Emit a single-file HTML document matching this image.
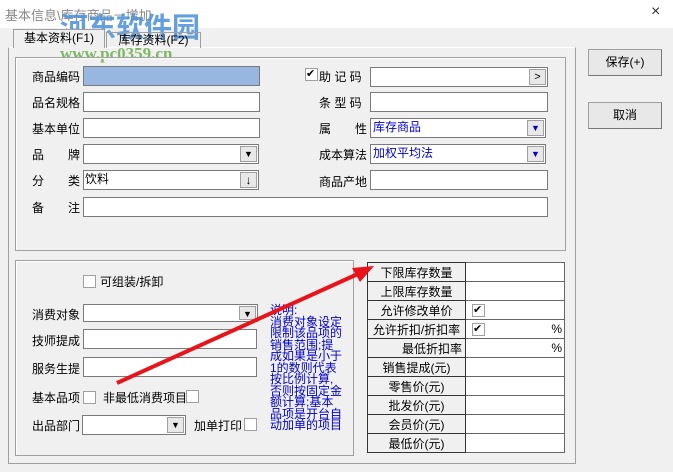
<!DOCTYPE html>
<html><head><meta charset="utf-8"><style>
*{box-sizing:border-box;margin:0;padding:0}
body{width:673px;height:472px;background:#f0f0f0;font-family:"Liberation Sans","Noto Sans CJK SC","WenQuanYi Zen Hei",sans-serif;font-size:12px;color:#000;position:relative;overflow:hidden}
.a{position:absolute;white-space:nowrap}
.in{position:absolute;background:#fff;border:1px solid #7a7a7a;height:20px}
.cb{position:absolute;width:13px;height:13px;background:#fff;border:1px solid #a0a0a0}
.dd{position:absolute;right:1px;top:1px;width:17px;height:16px;background:#e8e8e8;border:1px solid #a0a0a0;font-size:9px;text-align:center;line-height:14px}
.grp{position:absolute;border:1px solid #a0a0a0;box-shadow:inset 1px 1px 0 #fff}
.btn{position:absolute;background:#e8e8e8;border:1px solid #a0a0a0;border-right-color:#777;border-bottom-color:#777;text-align:center;line-height:24px;font-size:12px}
table{border-collapse:collapse;position:absolute;left:367px;top:262px}
td{border:1px solid #666;height:19px;font-size:12px;padding:0 3px}
td.l{width:98px;background:#f0f0f0;text-align:center;border-color:#333}
td.r{width:99px;background:#fff;position:relative}
</style></head><body>
<div class="a" style="left:0;top:0;width:673px;height:28px;background:#fff"></div>
<div class="a" style="left:5px;top:5px;color:#888;font-size:13px">基本信息\库存商品－增加</div>
<div class="a" style="left:651px;top:3px;font-size:16px;color:#333">×</div>
<div class="a" style="left:60px;top:6px;font-size:28px;font-weight:bold;color:#4a90d9;opacity:.85">河东软件园</div>
<div class="a" style="left:60px;top:44px;font-size:17px;font-weight:bold;color:#6ab04c;font-family:'Liberation Serif',serif;opacity:.85">www.pc0359.cn</div>
<div class="a" style="left:8px;top:47px;width:568px;height:417px;border:1px solid #a0a0a0;border-top-color:#fff"></div>
<div class="a" style="left:13px;top:29px;width:92px;height:19px;border:1px solid #a0a0a0;border-bottom:none;background:#f0f0f0;text-align:center;line-height:17px">基本资料(F1)</div>
<div class="a" style="left:106px;top:32px;width:95px;height:16px;border:1px solid #a0a0a0;border-bottom:none;text-align:center;line-height:14px">库存资料(F2)</div>
<div class="grp" style="left:15px;top:57px;width:551px;height:194px"></div>
<div class="grp" style="left:15px;top:260px;width:339px;height:196px"></div>
<div class="a" style="left:32px;top:68px">商品编码</div><div class="in" style="left:83px;top:66px;width:177px;background:#97b6e0"></div>
<div class="a" style="left:32px;top:94px">品名规格</div><div class="in" style="left:83px;top:92px;width:177px"></div>
<div class="a" style="left:32px;top:120px">基本单位</div><div class="in" style="left:83px;top:118px;width:177px"></div>
<div class="a" style="left:32px;top:146px">品　　牌</div><div class="in" style="left:83px;top:144px;width:176px"><div class="dd">▼</div></div>
<div class="a" style="left:32px;top:172px">分　　类</div><div class="in" style="left:83px;top:170px;width:176px;padding-left:1px;line-height:17px">饮料<div class="dd" style="font-size:12px">↓</div></div>
<div class="a" style="left:32px;top:199px">备　　注</div><div class="in" style="left:83px;top:197px;width:465px"></div>
<div class="cb" style="left:305px;top:68px;font-size:11px;line-height:11px">✔</div>
<div class="a" style="left:319px;top:68px">助 记 码</div><div class="in" style="left:370px;top:67px;width:178px"><div class="dd" style="font-size:11px">&gt;</div></div>
<div class="a" style="left:319px;top:94px">条 型 码</div><div class="in" style="left:370px;top:92px;width:178px"></div>
<div class="a" style="left:319px;top:120px">属　　性</div><div class="in" style="left:370px;top:118px;width:176px;color:#0000cc;padding-left:2px;line-height:17px">库存商品<div class="dd">▼</div></div>
<div class="a" style="left:319px;top:146px">成本算法</div><div class="in" style="left:370px;top:144px;width:176px;color:#0000cc;padding-left:2px;line-height:17px">加权平均法<div class="dd">▼</div></div>
<div class="a" style="left:319px;top:173px">商品产地</div><div class="in" style="left:370px;top:170px;width:178px"></div>
<div class="btn" style="left:588px;top:49px;width:74px;height:27px">保存(+)</div>
<div class="btn" style="left:588px;top:102px;width:74px;height:27px">取消</div>
<div class="cb" style="left:83px;top:275px"></div><div class="a" style="left:100px;top:273px">可组装/拆卸</div>
<div class="a" style="left:32px;top:306px">消费对象</div><div class="in" style="left:83px;top:304px;width:175px;height:18px"><div class="dd" style="height:14px">▼</div></div>
<div class="a" style="left:32px;top:332px">技师提成</div><div class="in" style="left:83px;top:329px;width:174px"></div>
<div class="a" style="left:32px;top:360px">服务生提</div><div class="in" style="left:83px;top:357px;width:174px"></div>
<div class="a" style="left:32px;top:389px">基本品项</div><div class="cb" style="left:83px;top:391px"></div>
<div class="a" style="left:103px;top:389px">非最低消费项目</div><div class="cb" style="left:186px;top:390px"></div>
<div class="a" style="left:32px;top:417px">出品部门</div><div class="in" style="left:82px;top:415px;width:104px"><div class="dd">▼</div></div>
<div class="a" style="left:194px;top:417px">加单打印</div><div class="cb" style="left:244px;top:418px"></div>
<div class="a" style="left:270px;top:305px;width:72px;white-space:normal;color:#0000cc;font-size:12px;line-height:11.5px">说明:<br>消费对象设定限制该品项的销售范围;提成如果是小于1的数则代表按比例计算,否则按固定金额计算;基本品项是开台自动加单的项目</div>
<table>
<tr><td class="l">下限库存数量</td><td class="r"></td></tr>
<tr><td class="l">上限库存数量</td><td class="r"></td></tr>
<tr><td class="l">允许修改单价</td><td class="r"><span class="cb" style="left:6px;top:3px;font-size:11px;line-height:11px">✔</span></td></tr>
<tr><td class="l" style="padding:0">允许折扣/折扣率</td><td class="r"><span class="cb" style="left:6px;top:3px;font-size:11px;line-height:11px">✔</span><span style="position:absolute;right:2px;top:2px">%</span></td></tr>
<tr><td class="l" style="text-align:right">最低折扣率</td><td class="r"><span style="position:absolute;right:2px;top:2px">%</span></td></tr>
<tr><td class="l">销售提成(元)</td><td class="r"></td></tr>
<tr><td class="l">零售价(元)</td><td class="r"></td></tr>
<tr><td class="l">批发价(元)</td><td class="r"></td></tr>
<tr><td class="l">会员价(元)</td><td class="r"></td></tr>
<tr><td class="l">最低价(元)</td><td class="r"></td></tr>
</table>
<svg class="a" style="left:0;top:0" width="673" height="472"><line x1="117" y1="383" x2="360" y2="273" stroke="#e8141a" stroke-width="4"/><polygon points="374,266 352,268 360,282" fill="#e8141a"/></svg>
</body></html>
